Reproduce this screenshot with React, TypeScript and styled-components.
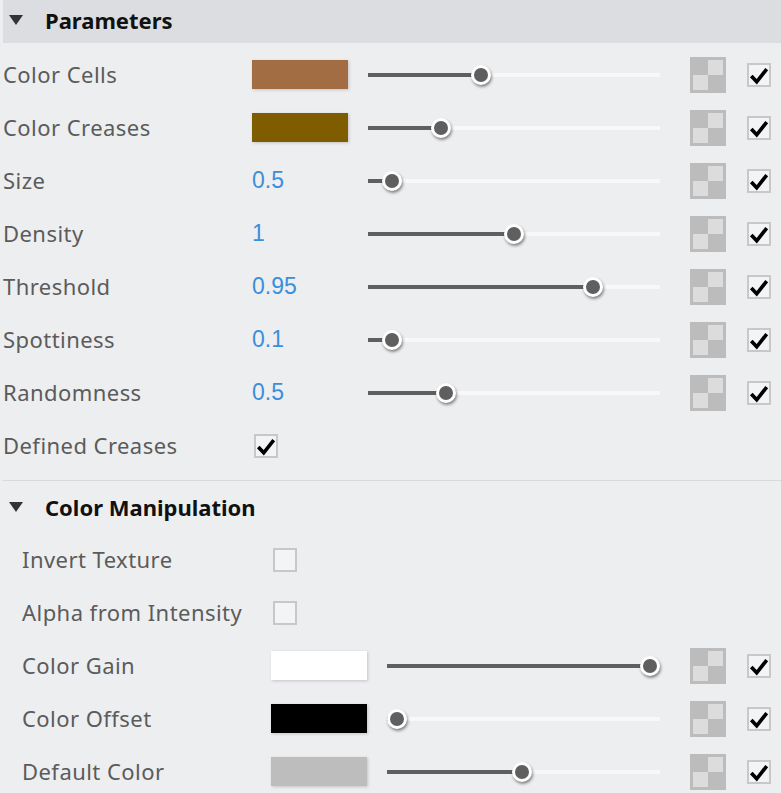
import React from "react";
import styled, { createGlobalStyle } from "styled-components";

const GlobalStyle = createGlobalStyle`
  html, body {
    margin: 0;
    padding: 0;
    background: #edeef0;
  }
  body {
    font-family: "Noto Sans", "Open Sans", sans-serif;
  }
`;

type Param = {
  label: string;
  kind: "color" | "number" | "bool";
  color?: string;
  value?: string;
  pct?: number;
  checked?: boolean;
  animated?: boolean;
};

const parameters: Param[] = [
  { label: "Color Cells", kind: "color", color: "#a36d44", pct: 0.379, animated: true },
  { label: "Color Creases", kind: "color", color: "#7f5c00", pct: 0.232, animated: true },
  { label: "Size", kind: "number", value: "0.5", pct: 0.051, animated: true },
  { label: "Density", kind: "number", value: "1", pct: 0.5, animated: true },
  { label: "Threshold", kind: "number", value: "0.95", pct: 0.79, animated: true },
  { label: "Spottiness", kind: "number", value: "0.1", pct: 0.051, animated: true },
  { label: "Randomness", kind: "number", value: "0.5", pct: 0.25, animated: true },
  { label: "Defined Creases", kind: "bool", checked: true },
];

const colorManip: Param[] = [
  { label: "Invert Texture", kind: "bool", checked: false },
  { label: "Alpha from Intensity", kind: "bool", checked: false },
  { label: "Color Gain", kind: "color", color: "#ffffff", pct: 1, animated: true },
  { label: "Color Offset", kind: "color", color: "#000000", pct: 0, animated: true },
  { label: "Default Color", kind: "color", color: "#bdbdbd", pct: 0.496, animated: true },
];

const Panel = styled.div`
  display: flex;
  flex-direction: column;
  width: 781px;
`;

const SectionHeader = styled.div<{ $shaded?: boolean }>`
  display: flex;
  align-items: center;
  gap: 22px;
  margin-left: 3px;
  padding-left: 6px;
  height: ${(p) => (p.$shaded ? "43px" : "52px")};
  margin-bottom: ${(p) => (p.$shaded ? "5px" : "0")};
  background: ${(p) => (p.$shaded ? "#dcdde0" : "transparent")};
  padding-bottom: ${(p) => (p.$shaded ? "3px" : "1px")};
  box-sizing: border-box;
`;

const Arrow = styled.span`
  width: 0;
  height: 0;
  border-left: 7.5px solid transparent;
  border-right: 7.5px solid transparent;
  border-top: 10px solid #333;
`;

const Title = styled.span`
  font-size: 22px;
  font-weight: 700;
  color: #111;
`;

const Separator = styled.div`
  height: 1px;
  background: #d8d9db;
  margin: 8px 0 0 3px;
`;

const Row = styled.div<{ $indent?: boolean }>`
  display: flex;
  align-items: center;
  height: 53px;
  padding-left: ${(p) => (p.$indent ? "22px" : "3px")};
  padding-right: 10px;
`;

const Label = styled.span`
  width: 249px;
  flex: none;
  font-size: 22px;
  color: #5b5b5b;
  white-space: nowrap;
  letter-spacing: 0.45px;
  margin-top: -2px;
`;

const Value = styled.span`
  width: 96px;
  flex: none;
  font-family: "Liberation Sans", Arial, sans-serif;
  font-size: 23px;
  color: #3b8edb;
`;

const Swatch = styled.div<{ $color: string }>`
  width: 96px;
  height: 29px;
  flex: none;
  background: ${(p) => p.$color};
  box-shadow: 1px 1px 3px rgba(0, 0, 0, 0.18);
`;

const SliderTrack = styled.div`
  position: relative;
  flex: 1;
  height: 4px;
  margin-left: 20px;
  margin-right: 30px;
  background: #f8f8f8;
`;

const SliderFill = styled.div`
  position: absolute;
  left: 0;
  top: 0;
  bottom: 0;
  background: #5f5f5f;
`;

const Thumb = styled.div`
  position: absolute;
  top: 50%;
  width: 20px;
  height: 20px;
  margin-top: -10px;
  box-sizing: border-box;
  border-radius: 50%;
  border: 3px solid #ffffff;
  background: #5f5f5f;
  box-shadow: 1px 2px 3px rgba(0, 0, 0, 0.45);
`;

const Checker = styled.div`
  width: 36px;
  height: 36px;
  flex: none;
  box-sizing: border-box;
  padding: 3px;
  background: #bcbcbc;
  display: grid;
  grid-template-columns: 15px 15px;
  grid-template-rows: 15px 15px;
  margin-right: 21px;
`;

const CheckerCell = styled.div<{ $light?: boolean }>`
  background: ${(p) => (p.$light ? "#dcdcdc" : "transparent")};
`;

const Box = styled.div<{ $offset?: boolean }>`
  width: 24px;
  height: 24px;
  flex: none;
  box-sizing: border-box;
  margin-left: ${(p) => (p.$offset ? "2px" : "0")};
  border: 2px solid #c8c8c8;
  background: #f3f4f6;
  display: flex;
  align-items: center;
  justify-content: center;
`;

const CheckBox = ({ checked, offset }: { checked?: boolean; offset?: boolean }) => (
  <Box $offset={offset}>
    {checked && (
      <svg width="22" height="22" viewBox="0 0 22 22">
        <polyline
          points="2.5,12 8.5,18.5 19.5,4.5"
          fill="none"
          stroke="#000"
          strokeWidth="4"
          strokeLinejoin="miter"
        />
      </svg>
    )}
  </Box>
);

const Slider = ({ pct }: { pct: number }) => (
  <SliderTrack>
    <SliderFill style={{ width: `calc(10px + ${pct} * (100% - 20px))` }} />
    <Thumb style={{ left: `calc(${pct} * (100% - 20px))` }} />
  </SliderTrack>
);

const AnimIcon = () => (
  <Checker>
    <CheckerCell />
    <CheckerCell $light />
    <CheckerCell $light />
    <CheckerCell />
  </Checker>
);

const ParamRow = ({ p, indent }: { p: Param; indent?: boolean }) => (
  <Row $indent={indent}>
    <Label>{p.label}</Label>
    {p.kind === "color" && <Swatch $color={p.color!} />}
    {p.kind === "number" && <Value>{p.value}</Value>}
    {p.kind === "bool" && <CheckBox checked={p.checked} offset />}
    {p.animated && (
      <>
        <Slider pct={p.pct ?? 0} />
        <AnimIcon />
        <CheckBox checked />
      </>
    )}
  </Row>
);

export default function App() {
  return (
    <>
      <GlobalStyle />
      <Panel>
        <SectionHeader $shaded>
          <Arrow />
          <Title>Parameters</Title>
        </SectionHeader>
        {parameters.map((p) => (
          <ParamRow key={p.label} p={p} />
        ))}
        <Separator />
        <SectionHeader>
          <Arrow />
          <Title>Color Manipulation</Title>
        </SectionHeader>
        {colorManip.map((p) => (
          <ParamRow key={p.label} p={p} indent />
        ))}
      </Panel>
    </>
  );
}
